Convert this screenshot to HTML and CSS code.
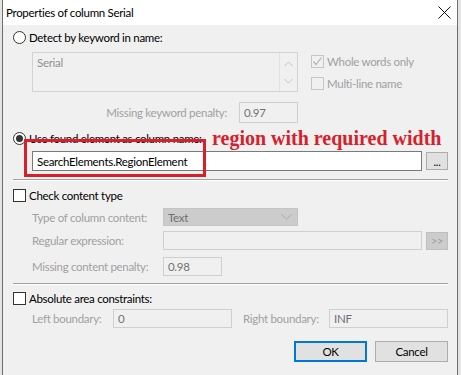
FILE: index.html
```html
<!DOCTYPE html>
<html>
<head>
<meta charset="utf-8">
<link rel="stylesheet" href="styles.css">
</head>
<body>
<div class="win">
  <div class="titlebar">
    <span class="title">Properties of column Serial</span>
    <svg class="close" width="13" height="13" viewBox="0 0 13 13"><path d="M0.5 0.5L12.5 12.5M12.5 0.5L0.5 12.5" stroke="#111" stroke-width="1"/></svg>
  </div>
  <div class="content">
    <div class="line r1"><span class="radio"></span><span class="lbl">Detect by keyword in name:</span></div>
    <div class="kw">
      <div class="textarea">
        <span class="ta-text">Serial</span>
        <div class="scroll">
          <svg width="9" height="6" viewBox="0 0 9 6"><path d="M0.5 5L4.5 1L8.5 5" fill="none" stroke="#c4c4c4" stroke-width="1"/></svg>
          <svg width="9" height="6" viewBox="0 0 9 6"><path d="M0.5 1L4.5 5L8.5 1" fill="none" stroke="#c4c4c4" stroke-width="1"/></svg>
        </div>
      </div>
      <div class="checks">
        <div class="line"><span class="cb dis"><svg width="11" height="11" viewBox="0 0 11 11"><path d="M1.5 5.5L4 8.5L9.5 1.5" fill="none" stroke="#b4b4b4" stroke-width="1.2"/></svg></span><span class="lbl dis-t">Whole words only</span></div>
        <div class="line"><span class="cb dis"></span><span class="lbl dis-t">Multi-line name</span></div>
      </div>
    </div>
    <div class="pen1">
      <span class="dis-t">Missing keyword penalty:</span>
      <span class="field dis w59">0.97</span>
    </div>
    <div class="line r2"><span class="radio on"><span class="dot"></span></span><span class="lbl">Use found element as column name:</span></div>
    <div class="inrow">
      <span class="field en w390">SearchElements.RegionElement</span>
      <span class="btn small">...</span>
    </div>
    <div class="sep s1"></div>
    <div class="line c1"><span class="cb"></span><span class="lbl">Check content type</span></div>
    <div class="frow type">
      <span class="flbl dis-t">Type of column content:</span>
      <span class="combo">Text<svg width="11" height="6" viewBox="0 0 11 6"><path d="M0.5 0.5L5.5 5L10.5 0.5" fill="none" stroke="#a8a8a8" stroke-width="1"/></svg></span>
    </div>
    <div class="frow regex">
      <span class="flbl dis-t">Regular expression:</span>
      <span class="field dis w259"></span>
      <span class="btn small dis-btn">&gt;&gt;</span>
    </div>
    <div class="frow pen2">
      <span class="flbl dis-t">Missing content penalty:</span>
      <span class="field dis w59">0.98</span>
    </div>
    <div class="sep s2"></div>
    <div class="line c2"><span class="cb"></span><span class="lbl">Absolute area constraints:</span></div>
    <div class="frow bounds">
      <span class="blbl dis-t">Left boundary:</span>
      <span class="field dis w119">0</span>
      <span class="blbl2 dis-t">Right boundary:</span>
      <span class="field dis w119">INF</span>
    </div>
    <div class="buttons">
      <span class="btn big ok">OK</span>
      <span class="btn big">Cancel</span>
    </div>
  </div>
  <div class="annot-box"></div>
  <div class="annot-text">region with required width</div>
</div>
</body>
</html>
```

FILE: styles.css
```css
* { box-sizing: border-box; }
html, body { margin: 0; padding: 0; }
body {
  background: #e4e4e4;
  padding-left: 2px;
  width: 461px;
  height: 375px;
  overflow: hidden;
  font-family: "Lato", "Noto Sans", sans-serif;
  font-size: 11.5px;
  letter-spacing: -0.3px;
  color: #000;
}
.win {
  position: relative;
  width: 456px;
  height: 375px;
  background: #f0f0f0;
  border-left: 1px solid #6e6e6e;
  border-right: 1px solid #6e6e6e;
}
.titlebar {
  height: 25px;
  background: #fff;
  display: flex;
  align-items: center;
  padding-left: 3px;
  padding-right: 6px;
}
.title { font-size: 11.5px; }
.close { margin-left: auto; }
.content {
  display: flex;
  flex-direction: column;
  padding: 0 9px 0 10px;
}
.line {
  display: flex;
  align-items: center;
  height: 13px;
  white-space: nowrap;
}
.lbl { margin-left: 3px; line-height: 13px; }
.dis-t { color: #a0a0a0; }
.r1 { margin-top: 6px; }
.radio {
  width: 13px;
  height: 13px;
  border: 1px solid #333;
  border-radius: 50%;
  background: #fff;
  display: flex;
  align-items: center;
  justify-content: center;
  flex: none;
}
.radio .dot {
  width: 7px;
  height: 7px;
  border-radius: 50%;
  background: #333;
}
.cb {
  width: 13px;
  height: 13px;
  border: 1px solid #333;
  background: #fff;
  flex: none;
  display: flex;
  align-items: center;
  justify-content: center;
}
.cb.dis { border-color: #c6c6c6; background: #f0f0f0; }
.kw {
  display: flex;
  margin-top: 8px;
  padding-left: 19px;
}
.textarea {
  width: 266px;
  height: 40px;
  border: 1px solid #d2d2d2;
  display: flex;
  color: #909090;
}
.ta-text { flex: 1; padding: 3px 0 0 4px; }
.scroll {
  width: 18px;
  border-left: 1px solid #e0e0e0;
  display: flex;
  flex-direction: column;
  align-items: center;
  justify-content: space-between;
  padding: 8px 0 7px;
}
.checks {
  margin-left: 13px;
  padding-top: 3px;
  display: flex;
  flex-direction: column;
  gap: 9px;
}
.pen1 {
  margin-top: 10px;
  margin-left: 19px;
  width: 266px;
  height: 21px;
  display: flex;
  align-items: center;
  justify-content: flex-end;
  gap: 12px;
}
.field {
  height: 100%;
  display: flex;
  align-items: center;
  padding-left: 4px;
  border: 1px solid #cfcfcf;
  white-space: nowrap;
}
.field.dis { color: #707070; background: #f0f0f0; }
.field.en { border-color: #7a7a7a; background: #fff; color: #000; }
.w59 { width: 59px; }
.w390 { width: 390px; }
.w259 { width: 259px; }
.w119 { width: 119px; }
.r2 { margin-top: 9px; }
.inrow {
  margin-top: 6px;
  margin-left: 19px;
  height: 20px;
  display: flex;
  align-items: center;
}
.btn {
  display: flex;
  align-items: center;
  justify-content: center;
  background: #e1e1e1;
  border: 1px solid #adadad;
}
.btn.small {
  width: 22px;
  height: 18px;
  margin-left: 4px;
  font-size: 11px;
  color: #000;
}
.btn.dis-btn { background: #cccccc; border-color: #bfbfbf; color: #a0a0a0; }
.sep {
  height: 1px;
  background: #a0a0a0;
  box-shadow: 0 1px 0 #fff;
}
.s1 { margin-top: 8px; }
.c1 { margin-top: 9px; }
.frow {
  display: flex;
  align-items: center;
  padding-left: 19px;
  white-space: nowrap;
}
.flbl { width: 131px; }
.type { margin-top: 6px; height: 18px; }
.combo {
  width: 135px;
  height: 100%;
  background: #cccccc;
  border: 1px solid #c4c4c4;
  color: #707070;
  display: flex;
  align-items: center;
  justify-content: space-between;
  padding: 0 5px 0 4px;
}
.regex { margin-top: 5px; height: 19px; }
.pen2 { margin-top: 7px; height: 19px; }
.s2 { margin-top: 7px; }
.c2 { margin-top: 8px; }
.bounds { margin-top: 4px; height: 19px; }
.blbl { width: 81px; }
.blbl2 { width: 86px; margin-left: 11px; }
.buttons {
  margin-top: 13px;
  height: 21px;
  display: flex;
  justify-content: flex-end;
  gap: 8px;
}
.btn.big { width: 73px; height: 21px; }
.btn.ok { border: 2px solid #0078d7; }
.annot-box {
  position: absolute;
  left: 21px;
  top: 139px;
  width: 182px;
  height: 38px;
  border: 3px solid #d8202c;
}
.annot-text {
  position: absolute;
  left: 209px;
  top: 127px;
  font-family: "Liberation Serif", serif;
  font-weight: bold;
  font-size: 20px;
  line-height: 22px;
  letter-spacing: 0;
  color: #d8202c;
  white-space: nowrap;
}
```
